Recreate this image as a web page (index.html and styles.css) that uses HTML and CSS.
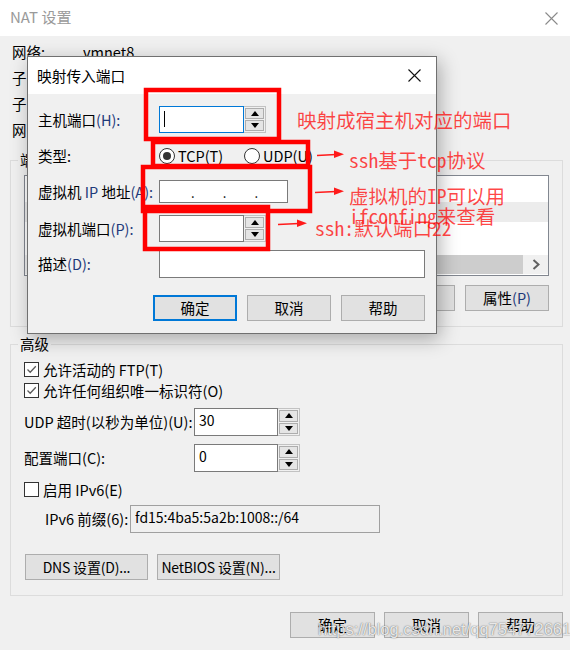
FILE: index.html
```html
<!DOCTYPE html>
<html lang="zh-CN">
<head>
<meta charset="utf-8">
<title>NAT 设置</title>
<link rel="stylesheet" href="styles.css">
</head>
<body>
<div class="win">
  <div class="titlebar">
    <span class="title">NAT 设置</span>
    <svg class="xicon gray" width="13" height="13" viewBox="0 0 13 13"><path d="M0.5 0.5L12.5 12.5M12.5 0.5L0.5 12.5"/></svg>
  </div>
  <div class="main">
    <div class="info">
      <div class="irow"><span class="ilabel">网络:</span><span>vmnet8</span></div>
      <div class="irow"><span class="ilabel">子网 IP:</span><span>192.168.145.0</span></div>
      <div class="irow"><span class="ilabel">子网掩码:</span><span>255.255.255.0</span></div>
      <div class="irow"><span class="ilabel">网关 IP(G):</span><span>192 . 168 . 145 . 2</span></div>
    </div>

    <fieldset class="group pf">
      <legend>端口转发(F)</legend>
      <div class="list">
        <div class="lhead"><span>主机端口</span><span>类型</span><span>虚拟机地址</span><span>描述</span></div>
        <div class="lrow sel"></div>
        <div class="lfill"></div>
        <div class="hscroll">
          <div class="thumb"></div>
          <div class="sarrow"><svg width="8" height="11" viewBox="0 0 8 11"><path d="M1.5 1L6.5 5.5L1.5 10"/></svg></div>
        </div>
      </div>
      <div class="btnrow right">
        <button class="btn w84">添加(A)...</button>
        <button class="btn w84">移除(R)</button>
        <button class="btn w84">属性<span class="mn">(P)</span></button>
      </div>
    </fieldset>

    <fieldset class="group adv">
      <legend>高级</legend>
      <div class="cbrow">
        <span class="cb"><svg width="13" height="13" viewBox="0 0 13 13"><path d="M2.5 6.5L5.2 9.2L10.8 3.3"/></svg></span>
        <span>允许活动的 FTP(T)</span>
      </div>
      <div class="cbrow">
        <span class="cb"><svg width="13" height="13" viewBox="0 0 13 13"><path d="M2.5 6.5L5.2 9.2L10.8 3.3"/></svg></span>
        <span>允许任何组织唯一标识符(O)</span>
      </div>
      <div class="frow r-udp">
        <span class="flabel">UDP 超时(以秒为单位)(U):</span>
        <div class="spin">
          <div class="sinput">30</div>
          <div class="sbtns"><span class="sb"><i class="up"></i></span><span class="sb"><i class="down"></i></span></div>
        </div>
      </div>
      <div class="frow r-cfg">
        <span class="flabel">配置端口(C):</span>
        <div class="spin">
          <div class="sinput">0</div>
          <div class="sbtns"><span class="sb"><i class="up"></i></span><span class="sb"><i class="down"></i></span></div>
        </div>
      </div>
      <div class="cbrow r-v6">
        <span class="cb"></span>
        <span>启用 IPv6(E)</span>
      </div>
      <div class="frow r-pre">
        <span class="flabel plabel">IPv6 前缀(6):</span>
        <div class="tbox gray">fd15:4ba5:5a2b:1008::/64</div>
      </div>
      <div class="btnrow r-dns">
        <button class="btn w123 small">DNS 设置(D)...</button>
        <button class="btn w123 small">NetBIOS 设置(N)...</button>
      </div>
    </fieldset>

    <div class="btnrow right footer">
      <button class="btn w85">确定</button>
      <button class="btn w85">取消</button>
      <button class="btn w85">帮助</button>
    </div>
  </div>

  <div class="dialog">
    <div class="dtitle">
      <span>映射传入端口</span>
      <svg class="xicon dark" width="13" height="13" viewBox="0 0 13 13"><path d="M0.5 0.5L12.5 12.5M12.5 0.5L0.5 12.5"/></svg>
    </div>
    <div class="dbody">
      <div class="drow d-host">
        <span class="dlabel">主机端口<span class="mn">(H):</span></span>
        <div class="spin dspin">
          <div class="sinput focus"><span class="caret"></span></div>
          <div class="sbtns"><span class="sb"><i class="up"></i></span><span class="sb"><i class="down"></i></span></div>
        </div>
      </div>
      <div class="drow d-type">
        <span class="dlabel">类型:</span>
        <span class="radio-item tcp"><span class="radio on"></span>TCP(T)</span>
        <span class="radio-item"><span class="radio"></span>UDP(U)</span>
      </div>
      <div class="drow d-ip">
        <span class="dlabel">虚拟机 <span class="mn">IP</span> 地址<span class="mn">(A):</span></span>
        <div class="ipbox">
          <span class="seg first"></span><span class="dot">.</span>
          <span class="seg"></span><span class="dot">.</span>
          <span class="seg"></span><span class="dot">.</span>
          <span class="seg"></span>
        </div>
      </div>
      <div class="drow d-vm">
        <span class="dlabel">虚拟机端口<span class="mn">(P):</span></span>
        <div class="spin dspin">
          <div class="sinput"></div>
          <div class="sbtns"><span class="sb"><i class="up"></i></span><span class="sb"><i class="down"></i></span></div>
        </div>
      </div>
      <div class="drow d-desc">
        <span class="dlabel">描述<span class="mn">(D):</span></span>
        <div class="tbox desc"></div>
      </div>
      <div class="btnrow right dbtns">
        <button class="btn w84 default">确定</button>
        <button class="btn w84">取消</button>
        <button class="btn w84">帮助</button>
      </div>
    </div>
  </div>

  <svg class="marks" width="570" height="650" viewBox="0 0 570 650">
    <g class="boxes">
      <rect x="146" y="90" width="133" height="49"/>
      <rect x="153" y="142" width="155" height="24"/>
      <rect x="143" y="167" width="167" height="44"/>
      <rect x="145" y="207" width="123" height="42"/>
    </g>
    <g class="arrows">
      <path class="ln" d="M317 155.5L336 154.5"/>
      <path class="hd" d="M334 150.5L344 154.3L334 158Z"/>
      <path class="ln" d="M315 192.5L336 191.5"/>
      <path class="hd" d="M334 187.5L344 191.3L334 195Z"/>
      <path class="ln" d="M278 224.5L299 223.5"/>
      <path class="hd" d="M297 219.5L307 223.3L297 227Z"/>
    </g>
  </svg>
  <div class="note n1">映射成宿主机对应的端口</div>
  <div class="note n2">ssh基于tcp协议</div>
  <div class="note n3">虚拟机的IP可以用</div>
  <div class="note n4">ifconfing来查看</div>
  <div class="note n5">ssh:默认端口22</div>
  <div class="watermark">https://blog.csdn.net/qq754772661</div>
</div>
</body>
</html>
```

FILE: styles.css
```css
* { box-sizing: border-box; }

body {
  margin: 0;
  width: 570px;
  height: 650px;
  overflow: hidden;
  background: #f0f0f0;
  color: #000;
  font-family: "Noto Sans CJK SC", "Noto Sans", sans-serif;
  font-size: 14.5px;
  line-height: 20px;
}

.win {
  position: relative;
  width: 570px;
  height: 650px;
}

/* ---------- title bar ---------- */
.titlebar {
  height: 36px;
  background: #fff;
  display: flex;
  align-items: center;
  justify-content: space-between;
  padding: 0 12px 0 10px;
}
.title {
  color: #9a9a9a;
  font-size: 15px;
  margin-top: -2px;
}
.xicon path { fill: none; stroke-width: 1.1; }
.xicon.gray path { stroke: #8a8a8a; }
.xicon.dark path { stroke: #111; }

/* ---------- main window ---------- */
.main {
  padding: 3px 7px 0 10px;
}
.info { padding-left: 2px; }
.irow {
  height: 26px;
  line-height: 26px;
  display: flex;
}
.ilabel { width: 71px; }

.group {
  margin: 0;
  border: 1px solid #dcdcdc;
  min-width: 0;
}
.group legend {
  padding: 0 2px;
  margin-left: -6px;
  line-height: 20px;
}
.pf {
  margin-top: 7px;
  padding: 5px 13px 15px 13px;
}
.adv {
  margin-top: 7px;
  padding: 5px 13px 15px 13px;
}

.list {
  height: 101px;
  border: 1px solid #828790;
  background: #fff;
  display: flex;
  flex-direction: column;
}
.lhead {
  height: 26px;
  display: flex;
  gap: 30px;
  padding-left: 6px;
  line-height: 26px;
}
.lrow { height: 20px; }
.lrow.sel { background: #ececec; }
.lfill { flex: 1; }
.hscroll {
  height: 19px;
  display: flex;
  background: #f0f0f0;
  margin-bottom: 1px;
}
.thumb { flex: 1; background: #cdcdcd; margin-left: 17px; }
.sarrow {
  width: 25px;
  display: flex;
  align-items: center;
  justify-content: center;
}
.sarrow path { fill: none; stroke: #606060; stroke-width: 2; }

.btnrow { display: flex; gap: 10px; }
.btnrow.right { justify-content: flex-end; }
.pf .btnrow { margin-top: 9px; }

.btn {
  height: 26px;
  padding: 0;
  background: #e1e1e1;
  border: 1px solid #adadad;
  font-family: inherit;
  font-size: 14.5px;
  line-height: 22px;
  color: #000;
  white-space: nowrap;
}
.btn.small { font-size: 14px; letter-spacing: -0.2px; }
.w84 { width: 84px; }
.w85 { width: 85px; }
.w123 { width: 123px; }
.mn { color: #1e3a7a; }

/* checkboxes */
.cbrow {
  height: 21px;
  display: flex;
  align-items: center;
  gap: 4px;
}
.cb {
  width: 15px;
  height: 15px;
  border: 1px solid #333;
  background: #fff;
  display: flex;
  align-items: center;
  justify-content: center;
}
.cb path { fill: none; stroke: #5a5a5a; stroke-width: 1.3; }

.frow { display: flex; align-items: center; }
.flabel { width: 170px; }
.r-udp { margin-top: 7px; height: 28px; }
.r-cfg { margin-top: 8px; height: 28px; }
.r-v6 { margin-top: 7px; }
.r-pre { margin-top: 5px; height: 28px; }
.plabel { width: 106px; padding-left: 21px; }
.r-dns { margin-top: 21px; margin-left: 1px; gap: 9px; }

.spin {
  display: flex;
  width: 106px;
  height: 28px;
}
.sinput {
  flex: 1;
  background: #fff;
  border: 1px solid #7a7a7a;
  padding: 1px 0 0 4px;
  font-size: 14px;
}
.sinput.focus { border-color: #0078d7; }
.sbtns {
  width: 22px;
  border: 1px solid #c2c2c2;
  border-left: none;
  background: #f0f0f0;
  padding: 1px;
  display: flex;
  flex-direction: column;
  gap: 1px;
}
.sb {
  flex: 1;
  background: #e5e5e5;
  border: 1px solid #adadad;
  display: flex;
  align-items: center;
  justify-content: center;
}
.sb i { display: block; width: 0; height: 0; border-left: 4px solid transparent; border-right: 4px solid transparent; }
.sb i.up { border-bottom: 5px solid #000; }
.sb i.down { border-top: 5px solid #000; }

.tbox {
  height: 28px;
  background: #fff;
  border: 1px solid #7a7a7a;
}
.tbox.gray {
  width: 250px;
  background: #f0f0f0;
  border-color: #a0a0a0;
  padding: 1px 0 0 4px;
  font-size: 14px;
}

.footer { margin-top: 16px; gap: 9px; }

/* ---------- dialog ---------- */
.dialog {
  position: absolute;
  left: 27px;
  top: 56px;
  width: 410px;
  height: 278px;
  background: #f0f0f0;
  border: 1px solid #707070;
  box-shadow: 3px 5px 18px rgba(0, 0, 0, 0.3);
}
.dtitle {
  height: 37px;
  background: #fff;
  display: flex;
  align-items: center;
  justify-content: space-between;
  padding: 0 15px 0 9px;
  font-size: 14.7px;
}
.dbody { padding: 12px 11px 0 10px; }
.drow { display: flex; align-items: center; }
.dlabel { width: 121px; }
.d-host { height: 27px; }
.d-type { margin-top: 13px; height: 20px; }
.d-ip { margin-top: 14px; height: 23px; }
.d-vm { margin-top: 12px; height: 27px; }
.d-desc { margin-top: 8px; height: 28px; }
.dbtns { margin-top: 17px; }

.dspin { width: 107px; height: 27px; }
.caret {
  display: block;
  width: 1px;
  height: 16px;
  background: #000;
  margin-top: 3px;
}

.radio-item {
  display: flex;
  align-items: center;
  gap: 3px;
}
.radio-item.tcp { width: 85px; }
.radio {
  width: 16px;
  height: 16px;
  border: 1px solid #333;
  border-radius: 50%;
  background: #fff;
  display: flex;
  align-items: center;
  justify-content: center;
}
.radio.on::after {
  content: "";
  width: 8px;
  height: 8px;
  border-radius: 50%;
  background: #333;
}

.ipbox {
  width: 129px;
  height: 23px;
  background: #fff;
  border: 1px solid #7a7a7a;
  display: flex;
  line-height: 23px;
}
.seg { width: 30px; }
.seg.first { width: 32px; }
.dot { width: 2px; display: flex; justify-content: center; font-size: 13px; }

.desc { width: 267px; }

.btn.default { border: 2px solid #0078d7; }

/* ---------- annotations ---------- */
.marks {
  position: absolute;
  left: 0;
  top: 0;
  pointer-events: none;
}
.boxes rect { fill: none; stroke: #ff0000; stroke-width: 4.5; }
.arrows .ln { fill: none; stroke: #ff1a1a; stroke-width: 1.5; }
.arrows .hd { fill: #ff1a1a; }

.note {
  position: absolute;
  font-family: "Noto Sans Mono CJK SC", "Noto Sans CJK SC", "Liberation Mono", monospace;
  font-size: 19.5px;
  line-height: 20px;
  color: rgba(255, 0, 0, 0.72);
  white-space: nowrap;
}
.n1 { left: 297px; top: 110px; }
.n2 { left: 349px; top: 150px; }
.n3 { left: 349px; top: 186px; }
.n4 { left: 349px; top: 206px; }
.n5 { left: 315px; top: 218px; }

.watermark {
  position: absolute;
  left: 318px;
  top: 619px;
  font-family: "Liberation Sans", sans-serif;
  font-size: 16.5px;
  line-height: 20px;
  color: rgba(255, 255, 255, 0.85);
  text-shadow: 0 0 1px rgba(0, 0, 0, 0.5), 0 0 2px rgba(0, 0, 0, 0.25);
  white-space: nowrap;
}
```
